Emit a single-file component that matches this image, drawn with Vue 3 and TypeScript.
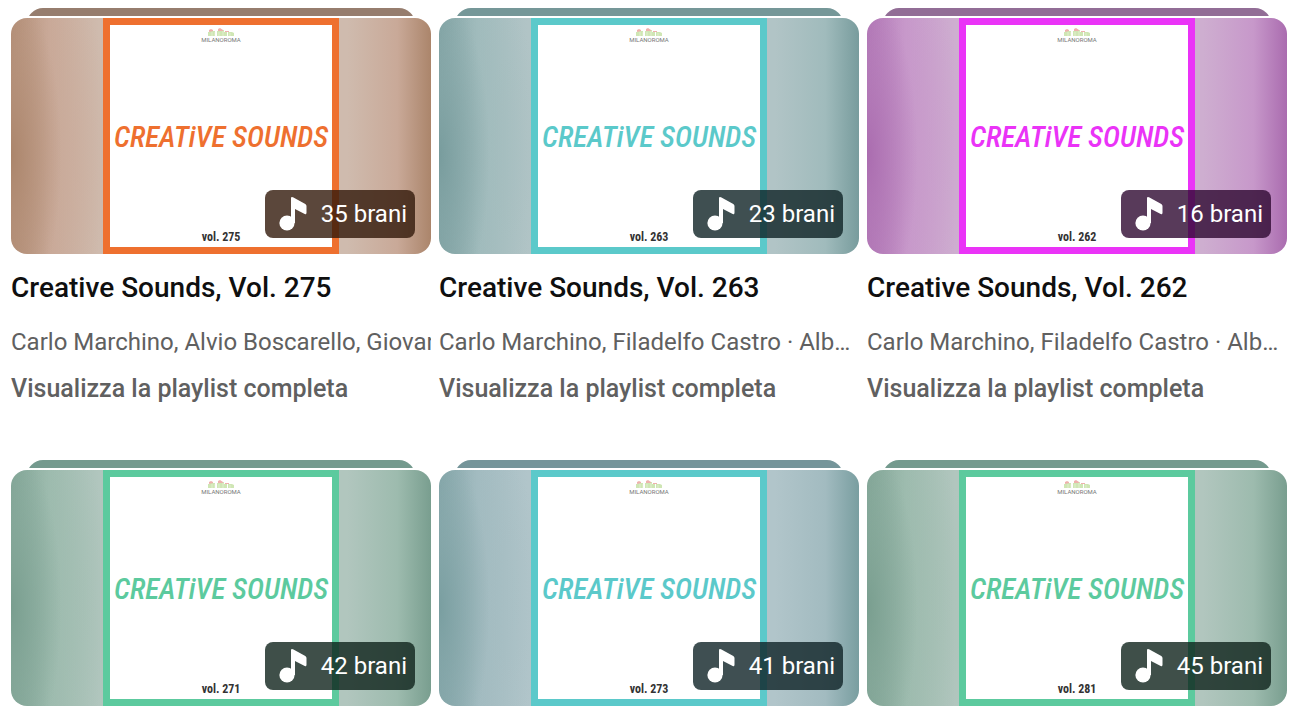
<script setup lang="ts">
type Theme = 'orange' | 'teal' | 'magenta' | 'green' | 'cyan'

interface Playlist {
  volume: number
  tracks: number
  theme: Theme
  byline?: string
  clipped?: boolean
}

const duo = 'Carlo Marchino, Filadelfo Castro · Album'

const playlists: Playlist[] = [
  { volume: 275, tracks: 35, theme: 'orange', byline: 'Carlo Marchino, Alvio Boscarello, Giovanni', clipped: true },
  { volume: 263, tracks: 23, theme: 'teal', byline: duo },
  { volume: 262, tracks: 16, theme: 'magenta', byline: duo },
  { volume: 271, tracks: 42, theme: 'green' },
  { volume: 273, tracks: 41, theme: 'cyan' },
  { volume: 281, tracks: 45, theme: 'green' },
]
</script>

<template>
  <main class="grid">
    <article v-for="item in playlists" :key="item.volume" class="card" :class="item.theme">
      <a href="#" class="thumbnail" :aria-label="`Creative Sounds, Vol. ${item.volume}`">
        <span class="stack"></span>
        <span class="backdrop">
          <span class="cover">
            <span class="label">
              <svg class="skyline" viewBox="0 0 28 8" aria-hidden="true">
                <path d="M1 8V4h2V3h5v5zM10 8V3h3V2h4v2h3v4zM21 8V4h4l2 1v3z" fill="#cfe6b4" />
                <path d="M2 4V2l2-1 2 1v1zM11 3V1l2-1 3 2v1zM18 3h4v1h-4z" fill="#efb1ad" />
                <path d="M5 4v4M8 4v4M12 4v4M16 3v5M23 5v3" stroke="#f1f7e8" stroke-width="0.5" />
              </svg>
              <span>MILANOROMA</span>
            </span>
            <span class="wordmark">CREATiVE SOUNDS</span>
            <span class="volume">vol. {{ item.volume }}</span>
          </span>
          <span class="badge">
            <svg class="note" viewBox="0 0 40 40" aria-hidden="true">
              <circle cx="14" cy="29" r="7.6" />
              <path d="M18 29V4.400Q18 2.200 20 3.300L32.300 9.900Q33.500 10.600 33.500 12V18.800Q33.500 20.800 31.700 19.900L22 15V29Z" />
            </svg>
            <span>{{ item.tracks }} brani</span>
          </span>
        </span>
      </a>
      <template v-if="item.byline">
        <h3 class="title"><a href="#">Creative Sounds, Vol. {{ item.volume }}</a></h3>
        <p class="byline" :class="{ clipped: item.clipped }">{{ item.byline }}</p>
        <a href="#" class="more">Visualizza la playlist completa</a>
      </template>
    </article>
  </main>
</template>

<style>
html,
body {
  background: #fff;
}
</style>

<style scoped>
.grid {
  display: grid;
  grid-template-columns: repeat(3, minmax(0, 1fr));
  gap: 53px 8px;
  padding: 8px 7px 0 11px;
  font-family: Roboto, "Liberation Sans", sans-serif;
}

.orange {
  --accent: #ee702f;
  --stack: #967d6e;
  --edge: #ab856b;
  --mid: #c9a998;
  --pale: #cfbbae;
  --badge: rgb(50 25 10 / 80%);
}

.teal {
  --accent: #5bc9ca;
  --stack: #759798;
  --edge: #789c9d;
  --mid: #a0bbbc;
  --pale: #b1c4c6;
  --badge: rgb(15 35 37 / 80%);
}

.magenta {
  --accent: #ea33f7;
  --stack: #926d96;
  --edge: #aa6caf;
  --mid: #c798ca;
  --pale: #ceaed0;
  --badge: rgb(46 9 49 / 80%);
}

.green {
  --accent: #5cca9e;
  --stack: #749a8e;
  --edge: #799e8f;
  --mid: #9dbbae;
  --pale: #b1c6be;
  --badge: rgb(15 35 28 / 80%);
}

.cyan {
  --accent: #5bc9ca;
  --stack: #75959a;
  --edge: #799ea0;
  --mid: #a2bbc0;
  --pale: #b1c5ca;
  --badge: rgb(15 35 39 / 80%);
}

.card {
  display: flex;
  flex-direction: column;
  min-width: 0;
}

.thumbnail {
  display: flex;
  flex-direction: column;
  gap: 2px;
  color: inherit;
  text-decoration: none;
}

.stack {
  height: 8px;
  margin: 0 16px;
  overflow: hidden;
}

.stack::before {
  content: "";
  display: block;
  height: 32px;
  border-radius: 16px;
  background: var(--stack);
}

.backdrop {
  position: relative;
  display: flex;
  justify-content: center;
  aspect-ratio: 105 / 59;
  overflow: hidden;
  border-radius: 16px;
  background:
    radial-gradient(ellipse 12% 70% at 0 58%, var(--edge), transparent),
    radial-gradient(ellipse 26% 80% at 0 55%, var(--mid), transparent),
    linear-gradient(90deg, var(--edge), var(--mid) 9%, var(--pale) 21%, var(--pale) 80%, var(--mid) 92%, var(--edge));
}

.cover {
  box-sizing: border-box;
  display: flex;
  flex-direction: column;
  align-items: center;
  justify-content: space-between;
  min-width: 0;
  height: 100%;
  aspect-ratio: 1;
  padding: 3px 0 1px;
  border: 7px solid var(--accent);
  background: #fff;
}

.label {
  display: flex;
  flex-direction: column;
  align-items: center;
  height: 18px;
  color: #777;
  font-size: 6px;
  line-height: 8px;
}

.skyline {
  width: 28px;
  height: 8px;
}

.wordmark {
  color: var(--accent);
  font-family: "Roboto Condensed", Roboto, sans-serif;
  font-size: 29px;
  font-style: italic;
  font-weight: 500;
  line-height: 36px;
  white-space: nowrap;
}

.volume {
  height: 18px;
  color: #333;
  font-family: "Roboto Condensed", Roboto, sans-serif;
  font-size: 12px;
  font-weight: 700;
  line-height: 18px;
}

.badge {
  position: absolute;
  right: 16px;
  bottom: 16px;
  display: flex;
  align-items: center;
  gap: 8px;
  height: 48px;
  padding: 0 8px;
  box-sizing: border-box;
  border-radius: 8px;
  background: var(--badge);
  color: #fff;
  font-size: 24px;
  line-height: 36px;
}

.note {
  width: 40px;
  height: 40px;
  fill: #fff;
}

.title,
.byline {
  margin: 0;
  overflow: hidden;
  text-overflow: ellipsis;
  white-space: nowrap;
}

.title {
  margin-top: 14px;
  font-size: 28px;
  font-weight: 500;
  line-height: 40px;
}

.title a {
  color: #0f0f0f;
  text-decoration: none;
}

.byline {
  margin-top: 16px;
  color: #606060;
  font-size: 24px;
  line-height: 36px;
}

.byline.clipped {
  text-overflow: clip;
}

.more {
  align-self: flex-start;
  margin-top: 11px;
  color: #606060;
  font-size: 25px;
  font-weight: 500;
  line-height: 36px;
  text-decoration: none;
}
</style>
